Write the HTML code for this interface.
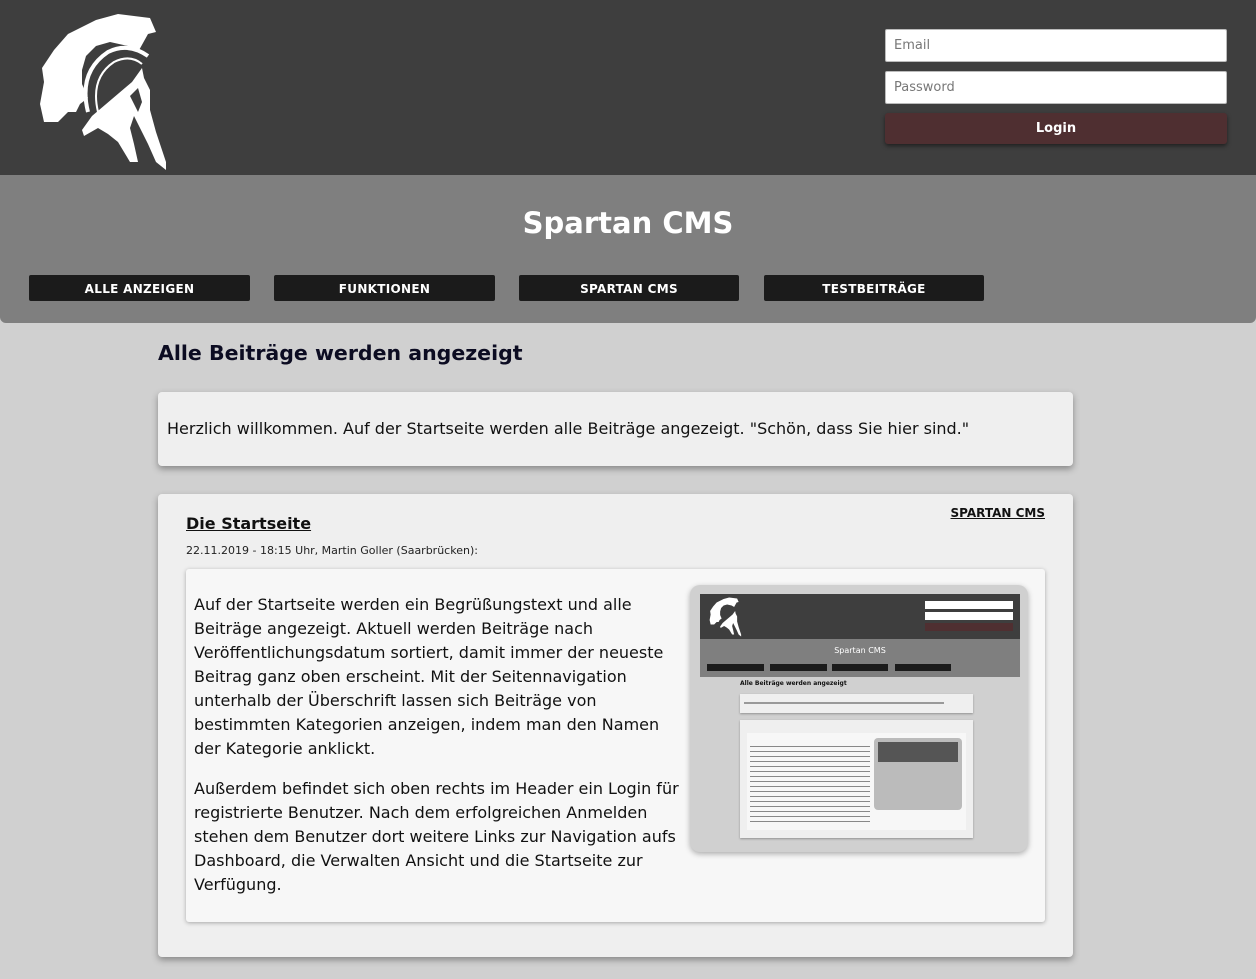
<!DOCTYPE html>
<html><head><meta charset="utf-8"><style>
*{box-sizing:border-box;margin:0;padding:0}
body{width:1256px;height:979px;overflow:hidden;background:#d0d0d0;font-family:"DejaVu Sans","Liberation Sans",sans-serif;color:#111;position:relative}
.hdr{position:absolute;left:0;top:0;width:1256px;height:175px;background:#3e3e3e}
.inp{position:absolute;left:885px;width:342px;height:33px;background:#fff;border:1px solid #bbb;border-radius:2px;font-size:13px;color:#777;padding:8px 8px}
.btn{position:absolute;left:885px;top:113px;width:342px;height:31px;background:#4f2f31;border-radius:3px;color:#fff;font-size:13px;font-weight:bold;text-align:center;line-height:32px;box-shadow:0 2px 4px rgba(0,0,0,.5)}
.band{position:absolute;left:0;top:175px;width:1256px;height:148px;background:#7f7f7f;border-radius:0 0 6px 6px}
.title{position:absolute;top:206px;width:1256px;text-align:center;color:#fff;font-size:29px;font-weight:600}
.nav{position:absolute;top:275px;height:26px;width:221px;background:#1b1b1b;color:#fff;font-size:12px;font-weight:bold;text-align:center;line-height:28px;letter-spacing:.3px;border-radius:2px}
h1{position:absolute;left:158px;top:341px;font-size:20.5px;color:#0c0c22;font-weight:bold}
.box{position:absolute;left:158px;width:915px;background:#efefef;border-radius:4px;box-shadow:0 3px 7px rgba(0,0,0,.35)}
.p{font-size:16px;line-height:24px;color:#111}
</style></head><body>
<div class="hdr">
<svg style="position:absolute;left:38px;top:12px" width="135" height="160" viewBox="0 0 135 160">
<path fill="#fff" d="M16 38 L30 22 L58 8 L80 2 L112 6 L118 20 L110 22 L100 40 L90 34 L72 30 L58 34 L48 44 L44 58 L44 72 L50 86 L42 92 L38 100 L30 100 L20 110 L6 110 L2 92 L6 70 L4 56 Z"/>
<path fill="none" stroke="#fff" stroke-width="4" d="M50 100 Q40 60 70 40 Q90 30 110 44"/>
<path fill="none" stroke="#fff" stroke-width="2" d="M60 100 Q52 66 76 50 Q92 42 104 52"/>
<path fill="#fff" d="M54 104 L94 70 L104 56 L106 66 L112 78 L112 98 L118 120 L128 150 L128 158 L118 150 L110 132 L104 120 L96 104 L92 116 L96 132 L100 150 L92 150 L80 130 L70 122 L60 116 L46 124 L44 118 Z"/>
<path fill="#3e3e3e" d="M92 84 L100 76 L104 90 L100 100 Z"/>
</svg>
<div class="inp" style="top:29px">Email</div>
<div class="inp" style="top:71px">Password</div>
<div class="btn">Login</div>
</div>
<div class="band"></div>
<div class="title">Spartan CMS</div>
<div class="nav" style="left:29px">ALLE ANZEIGEN</div>
<div class="nav" style="left:274px">FUNKTIONEN</div>
<div class="nav" style="left:519px;width:220px">SPARTAN CMS</div>
<div class="nav" style="left:764px;width:220px">TESTBEITRÄGE</div>
<h1>Alle Beiträge werden angezeigt</h1>
<div class="box" style="top:392px;height:74px"><div class="p" style="position:absolute;left:9px;top:25px">Herzlich willkommen. Auf der Startseite werden alle Beiträge angezeigt. "Schön, dass Sie hier sind."</div></div>
<div class="box" style="top:494px;height:463px">
<div style="position:absolute;left:28px;top:20px;font-size:16px;font-weight:bold;text-decoration:underline">Die Startseite</div>
<div style="position:absolute;right:28px;top:12px;font-size:12px;font-weight:bold;text-decoration:underline">SPARTAN CMS</div>
<div style="position:absolute;left:28px;top:50px;font-size:11px;color:#222">22.11.2019 - 18:15 Uhr, Martin Goller (Saarbrücken):</div>
<div style="position:absolute;left:28px;top:75px;width:859px;height:353px;background:#f7f7f7;border-radius:3px;box-shadow:0 1px 4px rgba(0,0,0,.3)">
<div class="p" style="position:absolute;left:8px;top:24px;width:495px">Auf der Startseite werden ein Begrüßungstext und alle Beiträge angezeigt. Aktuell werden Beiträge nach Veröffentlichungsdatum sortiert, damit immer der neueste Beitrag ganz oben erscheint. Mit der Seitennavigation unterhalb der Überschrift lassen sich Beiträge von bestimmten Kategorien anzeigen, indem man den Namen der Kategorie anklickt.<br><div style="height:16px"></div>Außerdem befindet sich oben rechts im Header ein Login für registrierte Benutzer. Nach dem erfolgreichen Anmelden stehen dem Benutzer dort weitere Links zur Navigation aufs Dashboard, die Verwalten Ansicht und die Startseite zur Verfügung.</div>
<div style="position:absolute;left:504px;top:16px;width:338px;height:267px;background:#d0d0d0;border-radius:10px;box-shadow:0 2px 6px rgba(0,0,0,.3);overflow:hidden">
<div style="position:absolute;left:10px;top:9px;width:320px;height:250px;background:#d0d0d0">
<div style="position:absolute;left:0;top:0;width:320px;height:45px;background:#3e3e3e"></div>
<svg style="position:absolute;left:9px;top:3px" width="34" height="40" viewBox="0 0 135 160"><path fill="#fff" d="M16 38 L30 22 L58 8 L80 2 L112 6 L118 20 L110 22 L100 40 L90 34 L72 30 L58 34 L48 44 L44 58 L44 72 L50 86 L42 92 L38 100 L30 100 L20 110 L6 110 L2 92 L6 70 L4 56 Z"/><path fill="#fff" d="M54 104 L94 70 L104 56 L106 66 L112 78 L112 98 L118 120 L128 150 L128 158 L118 150 L110 132 L104 120 L96 104 L92 116 L96 132 L100 150 L92 150 L80 130 L70 122 L60 116 L46 124 L44 118 Z"/></svg>
<div style="position:absolute;left:225px;top:7px;width:88px;height:8px;background:#fff"></div>
<div style="position:absolute;left:225px;top:18px;width:88px;height:8px;background:#fff"></div>
<div style="position:absolute;left:225px;top:29px;width:88px;height:8px;background:#4f2f31"></div>
<div style="position:absolute;left:0;top:45px;width:320px;height:38px;background:#7f7f7f"></div>
<div style="position:absolute;left:0;top:52px;width:320px;text-align:center;color:#fff;font-size:8px">Spartan CMS</div>
<div style="position:absolute;left:7px;top:70px;width:57px;height:7px;background:#1b1b1b"></div>
<div style="position:absolute;left:70px;top:70px;width:57px;height:7px;background:#1b1b1b"></div>
<div style="position:absolute;left:132px;top:70px;width:56px;height:7px;background:#1b1b1b"></div>
<div style="position:absolute;left:195px;top:70px;width:56px;height:7px;background:#1b1b1b"></div>
<div style="position:absolute;left:40px;top:86px;font-size:6px;font-weight:bold">Alle Beiträge werden angezeigt</div>
<div style="position:absolute;left:40px;top:100px;width:233px;height:19px;background:#efefef;box-shadow:0 1px 2px rgba(0,0,0,.3)"><div style="margin:8px 4px;height:2px;width:200px;background:#999"></div></div>
<div style="position:absolute;left:40px;top:126px;width:233px;height:118px;background:#efefef;box-shadow:0 1px 2px rgba(0,0,0,.3)"></div>
<div style="position:absolute;left:47px;top:139px;width:219px;height:97px;background:#f7f7f7"></div>
<div style="position:absolute;left:50px;top:150px;width:120px;height:80px;background:repeating-linear-gradient(#f7f7f7 0 2px,#888 2px 3px,#f7f7f7 3px 5px)"></div>
<div style="position:absolute;left:174px;top:144px;width:88px;height:72px;background:#bbb;border-radius:4px"><div style="margin:4px;height:20px;background:#555"></div></div>
</div></div>
</div>
</div>
</body></html>
